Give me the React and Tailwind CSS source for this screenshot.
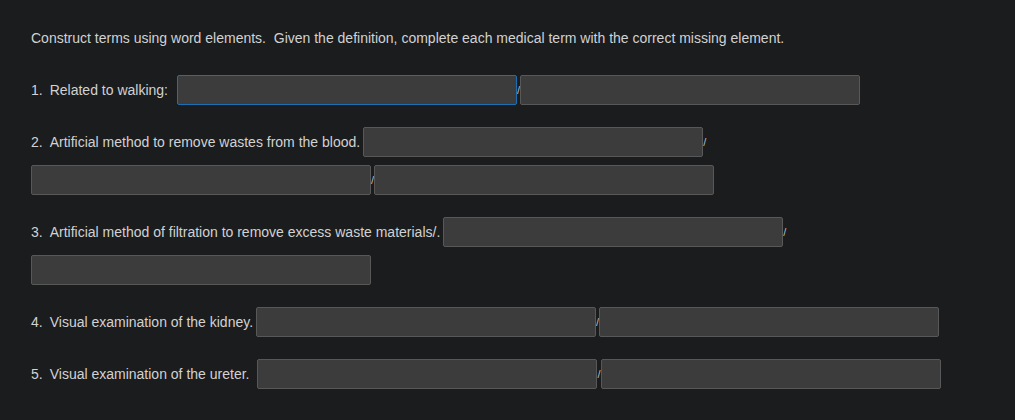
const questions = [
  { n: '1.', text: 'Related to walking:', gap: 'ml-[9px]', blanks: 2, focused: true },
  { n: '2.', text: 'Artificial method to remove wastes from the blood.', gap: 'ml-[3px]', blanks: 3 },
  { n: '3.', text: 'Artificial method of filtration to remove excess waste materials/.', gap: 'ml-[3px]', blanks: 2 },
  { n: '4.', text: 'Visual examination of the kidney.', gap: 'ml-[3px]', blanks: 2 },
  { n: '5.', text: 'Visual examination of the ureter.', gap: 'ml-[8px]', blanks: 2 },
];

function Blank({ focused }) {
  return (
    <input
      type="text"
      className={
        'h-[30px] w-[340px] rounded-[2px] border bg-[#3c3c3c] px-2 text-[14px] text-[#dcdcdc] outline-none ' +
        (focused ? 'border-[#1d6fb4]' : 'border-[#585858]')
      }
    />
  );
}

function Question({ q }) {
  const items = [];
  for (let i = 0; i < q.blanks; i++) {
    items.push(
      <span key={'b' + i} className={i === 0 ? q.gap : ''}>
        <Blank focused={q.focused && i === 0} />
      </span>
    );
    if (i < q.blanks - 1) {
      items.push(
        <span key={'s' + i} className="text-[11px] text-[#bdbdbd]">
          /
        </span>
      );
    }
  }

  return (
    <div className="flex flex-wrap items-center gap-y-2">
      <span>
        {q.n}
        <span className="ml-[7px]">{q.text}</span>
      </span>
      {items}
    </div>
  );
}

export default function App() {
  return (
    <div
      className="min-h-[420px] bg-[#1b1c1e] pl-[31px] pr-[30px] pt-[29px] text-[14px] leading-[18px] text-[#d2d2d2]"
      style={{ fontFamily: '"Liberation Sans", Arial, sans-serif' }}
    >
      <p>
        Construct terms using word elements.&nbsp; Given the definition, complete each medical term with the correct
        missing element.
      </p>
      <div className="mt-[28px] flex flex-col gap-[22px]">
        {questions.map((q) => (
          <Question key={q.n} q={q} />
        ))}
      </div>
    </div>
  );
}
